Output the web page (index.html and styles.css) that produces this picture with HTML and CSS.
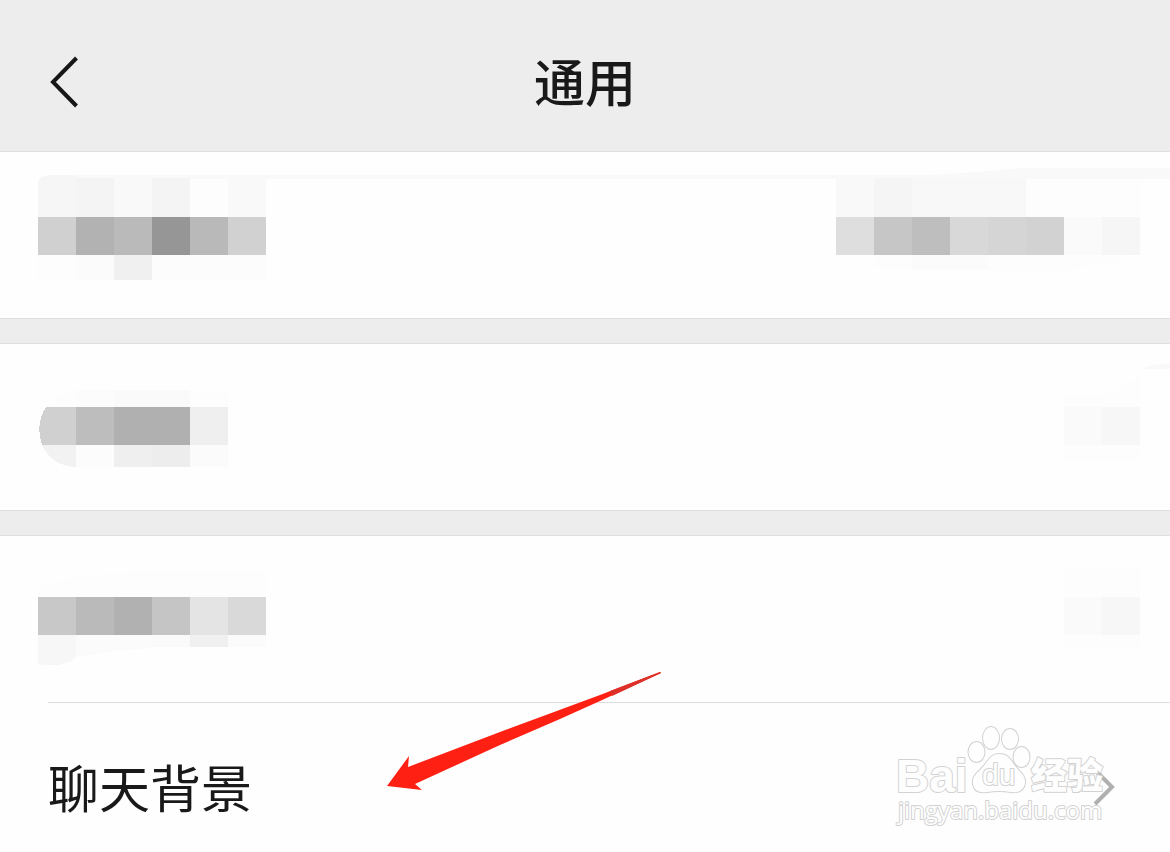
FILE: index.html
```html
<!DOCTYPE html>
<html lang="zh-CN">
<head>
<meta charset="utf-8">
<meta name="viewport" content="width=device-width, initial-scale=1">
<title>通用</title>
<link rel="stylesheet" href="styles.css">
</head>
<body>
<header class="header">
  <button class="back" type="button" aria-label="返回">
    <svg width="30" height="54" viewBox="0 0 30 54"><path d="M28.500 3 L5 27 L28.500 51" fill="none" stroke="#171717" stroke-width="4"/></svg>
  </button>
  <h1 class="title">通用</h1>
</header>
<main class="settings">
  <section class="group">
    <div class="row masked">
      <svg class="band" viewBox="0 0 1170 166" preserveAspectRatio="none" aria-hidden="true">
        <path d="M40 26 Q42 23 52 23 H930 Q980 20 1020 16 H1170 V27 H40 Z" fill="#f9f9f9"/>
      </svg>
      <svg class="mosaic" width="228" height="166" viewBox="38 152 228 166" aria-hidden="true">
        <path d="M38 217 V181 Q40 176 52 175 H76 V217 Z" fill="#f6f6f6"/>
        <path d="M76 178h38v39H76z" fill="#f4f4f4"/><path d="M114 178h38v39h-38z" fill="#f9f9f9"/>
        <path d="M152 178h38v39h-38z" fill="#f4f4f4"/><path d="M190 179h38v38h-38z" fill="#fdfdfd"/>
        <path d="M228 178h38v39h-38z" fill="#f9f9f9"/>
        <path d="M38 217h38v38H38z" fill="#d0d0d0"/><path d="M76 217h38v38H76z" fill="#b2b2b2"/>
        <path d="M114 217h38v38h-38z" fill="#bababa"/><path d="M152 217h38v38h-38z" fill="#969696"/>
        <path d="M190 217h38v38h-38z" fill="#b9b9b9"/><path d="M228 217h38v38h-38z" fill="#d1d1d1"/>
        <path d="M38 255h38v25H38z" fill="#fdfdfd"/><path d="M76 255h38v25H76z" fill="#fbfbfb"/>
        <path d="M114 255h38v25h-38z" fill="#f0f0f0"/><path d="M152 255h114v25H152z" fill="#fcfcfc"/>
      </svg>
      <svg class="mosaic" width="304" height="166" viewBox="836 152 304 166" aria-hidden="true">
        <path d="M836 178h38v39h-38z" fill="#f9f9f9"/><path d="M874 178h38v39h-38z" fill="#f5f5f5"/>
        <path d="M912 178h114v39H912z" fill="#f8f8f8"/><path d="M1026 179h114v38h-114z" fill="#fdfdfd"/>
        <path d="M836 217h38v38h-38z" fill="#dedede"/><path d="M874 217h38v38h-38z" fill="#c6c6c6"/>
        <path d="M912 217h38v38h-38z" fill="#bebebe"/><path d="M950 217h38v38h-38z" fill="#d8d8d8"/>
        <path d="M988 217h38v38h-38z" fill="#d5d5d5"/><path d="M1026 217h38v38h-38z" fill="#d2d2d2"/>
        <path d="M1064 217h38v38h-38z" fill="#fafafa"/><path d="M1102 217h38v38h-38z" fill="#f6f6f6"/>
        <path d="M874 255h38v13h-38z" fill="#fdfdfd"/><path d="M912 255h76v15h-76z" fill="#fbfbfb"/>
        <path d="M988 255h140l-10 8-30 3-20 5h-80z" fill="#fdfdfd"/>
      </svg>
    </div>
  </section>
  <section class="group">
    <div class="row masked">
      <svg class="corner" width="28" height="6" viewBox="0 0 28 6" aria-hidden="true"><path d="M0 5 Q10 0 20 0 H28 V5 Z" fill="#f9f9f9"/></svg>
      <svg class="mosaic" width="190" height="166" viewBox="38 344 190 166" aria-hidden="true">
        <path d="M46 407 Q57 393 76 390 V407 Z" fill="#fdfdfd"/><path d="M76 390h38v17H76z" fill="#fcfcfc"/>
        <path d="M114 390h76v17h-76z" fill="#fafafa"/><path d="M190 391h38v16h-38z" fill="#fdfdfd"/>
        <path d="M76 407 H46 Q35 424 42 445 H76 Z" fill="#d0d0d0"/><path d="M76 407h38v38H76z" fill="#bdbdbd"/>
        <path d="M114 407h76v38h-76z" fill="#b0b0b0"/><path d="M190 407h38v38h-38z" fill="#efefef"/>
        <path d="M42 445 Q52 466 76 467 V445 Z" fill="#f2f2f2"/><path d="M76 445h38v22H76z" fill="#fcfcfc"/>
        <path d="M114 445h38v22h-38z" fill="#efefef"/><path d="M152 445h38v22h-38z" fill="#ededed"/>
        <path d="M190 445h38v22h-38z" fill="#fbfbfb"/>
      </svg>
      <svg class="mosaic" width="76" height="166" viewBox="1064 344 76 166" aria-hidden="true">
        <path d="M1064 394 H1110 L1140 376 V461 H1064 Z" fill="#fdfdfd"/>
        <path d="M1064 407h38v38h-38z" fill="#fafafa"/><path d="M1102 407h38v38h-38z" fill="#f7f7f7"/>
      </svg>
    </div>
  </section>
  <section class="group last">
    <div class="row masked">
      <svg class="mosaic" width="228" height="166" viewBox="38 536 228 166" aria-hidden="true">
        <path d="M38 597 V587 Q70 575 140 572 H266 V597 Z" fill="#fdfdfd"/>
        <path d="M38 597h38v38H38z" fill="#c8c8c8"/><path d="M76 597h38v38H76z" fill="#bababa"/>
        <path d="M114 597h38v38h-38z" fill="#b1b1b1"/><path d="M152 597h38v38h-38z" fill="#c5c5c5"/>
        <path d="M190 597h38v38h-38z" fill="#e4e4e4"/><path d="M228 597h38v38h-38z" fill="#d9d9d9"/>
        <path d="M38 635h38v22Q64 669 38 664z" fill="#f7f7f7"/>
        <path d="M76 635h76v13Q108 651 76 657z" fill="#fbfbfb"/>
        <path d="M152 635h38v12h-38z" fill="#fafafa"/><path d="M190 635h38v12h-38z" fill="#f0f0f0"/>
        <path d="M228 635h38v12h-38z" fill="#fbfbfb"/>
      </svg>
      <svg class="mosaic" width="76" height="166" viewBox="1064 536 76 166" aria-hidden="true">
        <path d="M1064 569h76v78h-76z" fill="#fdfdfd"/>
        <path d="M1064 597h38v38h-38z" fill="#fafafa"/><path d="M1102 597h38v38h-38z" fill="#f7f7f7"/>
      </svg>
    </div>
    <a class="row link" href="#background">
      <span>聊天背景</span>
      <svg width="24" height="40" viewBox="0 0 24 40" aria-hidden="true"><path d="M3 3 L20 20 L3 37" fill="none" stroke="#b0b0b0" stroke-width="4"/></svg>
    </a>
    <svg class="arrow" width="280" height="124" viewBox="384 668 280 124" aria-hidden="true">
      <path d="M387 786 L409 756 L408 767 L450 751 L500 732 L600 695 L660 672 L661 673 L600 701 L560 719 L500 745 L415 784 L422 790 Z" fill="#ff2014"/>
      <path d="M610 691 L660 672 L661 673 L612 696 Z" fill="#dc3029"/>
    </svg>
    <svg class="watermark" width="216" height="108" viewBox="892 722 216 108" role="img" aria-label="Baidu 经验">
      <g class="outline">
        <text class="brand" x="896" y="792">Bai</text>
        <ellipse cx="976.500" cy="752" rx="8" ry="10"/>
        <ellipse cx="991" cy="738" rx="8" ry="11"/>
        <ellipse cx="1010" cy="739" rx="8" ry="10"/>
        <ellipse cx="1021.500" cy="757" rx="8" ry="10"/>
        <path d="M999 754 C990 754 988 762 982 768 C976 774 972 777 973 784 C974 791 980 793 987 792 Q999 790 1011 792 C1019 793 1024 790 1025 783 C1026 776 1020 772 1015 766 C1010 759 1008 754 999 754 Z"/>
        <text class="du" x="982" y="785">du</text>
        <text class="experience" x="1031" y="789">经验</text>
        <text class="domain" x="898" y="819">jingyan.baidu.com</text>
      </g>
    </svg>
  </section>
</main>
</body>
</html>
```
FILE: styles.css
```css
* { box-sizing: border-box; }

body {
  margin: 0;
  min-height: 100vh;
  background: #fefefe;
  color: #191919;
  font-family: "Noto Sans CJK SC", sans-serif;
  overflow-x: hidden;
}

svg { display: block; flex: none; }

.header {
  display: grid;
  grid-template-columns: 1fr auto 1fr;
  align-items: center;
  height: 152px;
  padding: 12px 48px 0;
  background: #ededed;
  border-bottom: 1px solid #dedede;
}

.back {
  justify-self: start;
  padding: 0;
  border: 0;
  background: none;
}

.title {
  margin: 0;
  padding-bottom: 4px;
  font-size: 51px;
  font-weight: 500;
  line-height: 76px;
}

.settings {
  display: flex;
  flex-direction: column;
  gap: 24px;
  background: #ededed;
}

.group {
  position: relative;
  background: #fefefe;
  border-bottom: 1px solid #dedede;
}

.group + .group { border-top: 1px solid #dedede; }

.group.last { border-bottom: 0; }

.row {
  display: flex;
  align-items: center;
  justify-content: space-between;
}

.masked {
  position: relative;
  padding: 0 30px 0 38px;
}

.mosaic {
  position: relative;
  shape-rendering: crispEdges;
}

.band {
  position: absolute;
  inset: 0;
  width: 100%;
  height: 100%;
}

.corner {
  position: absolute;
  top: 20px;
  right: 0;
}

.link {
  min-height: 150px;
  margin-left: 48px;
  padding: 18px 54px 0 0;
  border-top: 1px solid #dedede;
  color: inherit;
  font-size: 51px;
  line-height: 76px;
  text-decoration: none;
}

.link span { padding-bottom: 2px; }

.arrow {
  position: absolute;
  top: 132px;
  left: 384px;
}

.watermark {
  position: absolute;
  top: 186px;
  right: 62px;
}

.outline {
  fill: #fefefe;
  stroke: #d2d2d2;
  stroke-width: 2px;
  stroke-linejoin: round;
  paint-order: stroke;
}

.brand { font: bold 46px "Liberation Sans", sans-serif; }
.du { font: 30px "Liberation Sans", sans-serif; }
.experience { font: 900 36px "Noto Sans CJK SC", sans-serif; }
.domain { font: 24px "Open Sans", sans-serif; }
```
